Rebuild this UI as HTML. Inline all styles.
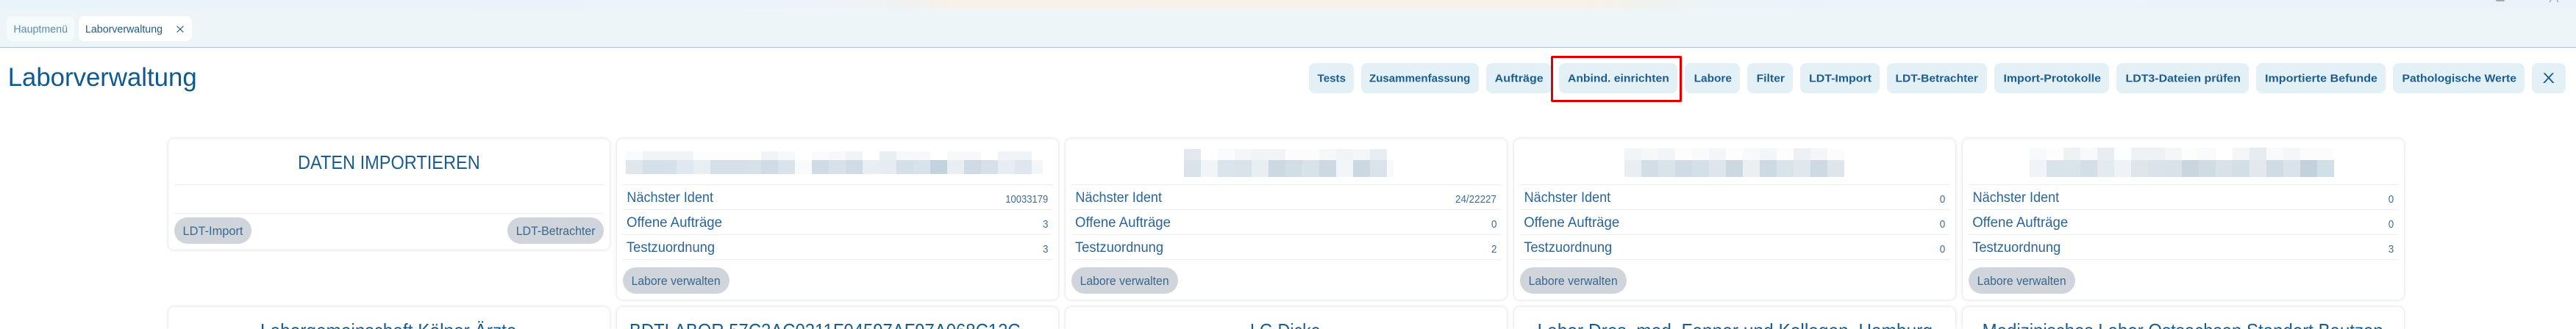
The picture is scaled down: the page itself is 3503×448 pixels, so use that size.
<!DOCTYPE html>
<html lang="de"><head><meta charset="utf-8"><title>Laborverwaltung</title>
<style>
html,body{margin:0;padding:0;width:3503px;height:448px;overflow:hidden;background:#fff}
#w{position:relative;width:3503px;height:448px;overflow:hidden;background:#fff}
.a{position:absolute}
#top{left:0;top:0;width:3503px;height:12px;background:linear-gradient(90deg,#e9f3fa 0,#ebf3fb 1000px,#eef3fb 1100px,#f1f2ef 1250px,#f9f0e8 1300px,#f8f0ea 2150px,#eef3ef 2250px,#ebf4f8 2350px,#ebf3fb 2500px,#ebf3fa 3503px)}
#bar{left:0;top:12px;width:3503px;height:52px;background:#edf5f9;border-bottom:1px solid #a9c8da}
.tab{top:22px;height:34px;border-radius:8px}
.b{top:86px;height:41px;background:#e3f0f6;border-radius:8px}
.c{width:600px;background:#fff;border-radius:8px;box-shadow:0 0 4px rgba(70,85,115,.24);box-sizing:border-box}
.e{top:418px;height:30px;border-radius:8px 8px 0 0}
.d{height:1px;background:#ebeef1}
.p{background:#d0d5db;height:36px;top:364px;border-radius:18px}
.bl{display:flex}
.bl i{display:block;width:23px;height:100%;flex:none}
svg{position:absolute;left:0;top:0}
text{font-family:"Liberation Sans",sans-serif;fill:#0b5184}
.bt{font-size:14.5px;font-weight:700;fill:#1d5c8c}
.r{font-size:19px;fill:#2a659a}
.v{font-size:15px;fill:#3f6f96}
.g{font-size:17px;fill:#3a6790}
.h{font-size:26px;fill:#1a5c8c}
</style></head><body>
<div id="w">
<div class="a" id="top"></div>
<div class="a" id="bar"></div>
<div class="a" style="left:3394px;top:0;width:12px;height:2px;background:#a4a9ad;border-radius:0 0 3px 3px"></div>
<div class="a tab" style="left:9px;width:92px;background:#f5fafb"></div>
<div class="a tab" style="left:107px;width:154px;background:#fff"></div>

<div class="a b" style="left:1780px;width:61px"></div>
<div class="a b" style="left:1851px;width:160px"></div>
<div class="a b" style="left:2021px;width:89px"></div>
<div class="a b" style="left:2120px;width:161px"></div>
<div class="a b" style="left:2291px;width:75px"></div>
<div class="a b" style="left:2376px;width:62px"></div>
<div class="a b" style="left:2448px;width:108px"></div>
<div class="a b" style="left:2566px;width:136px"></div>
<div class="a b" style="left:2712px;width:156px"></div>
<div class="a b" style="left:2878px;width:180px"></div>
<div class="a b" style="left:3068px;width:176px"></div>
<div class="a b" style="left:3254px;width:179px"></div>
<div class="a b" style="left:3443px;width:46px"></div>
<div class="a" style="left:2109px;top:76px;width:178px;height:63px;border:3px solid #e00000;box-sizing:border-box;border-radius:2px"></div>

<div class="a c" style="left:229px;top:189px;height:151px"></div>
<div class="a c" style="left:839px;top:189px;height:219px"></div>
<div class="a c" style="left:1449px;top:189px;height:219px"></div>
<div class="a c" style="left:2059px;top:189px;height:219px"></div>
<div class="a c" style="left:2669px;top:189px;height:219px"></div>
<div class="a c e" style="left:229px"></div>
<div class="a c e" style="left:839px"></div>
<div class="a c e" style="left:1449px"></div>
<div class="a c e" style="left:2059px"></div>
<div class="a c e" style="left:2669px"></div>

<div class="a d" style="left:237px;top:251px;width:584px"></div>
<div class="a d" style="left:237px;top:290px;width:584px"></div>
<div class="a p" style="left:237px;top:296px;width:105px"></div>
<div class="a p" style="left:690px;top:296px;width:131px"></div>

<div class="a d" style="left:847px;top:251px;width:584px"></div><div class="a d" style="left:847px;top:285px;width:584px"></div><div class="a d" style="left:847px;top:319px;width:584px"></div><div class="a d" style="left:847px;top:353px;width:584px"></div>
<div class="a d" style="left:1457px;top:251px;width:584px"></div><div class="a d" style="left:1457px;top:285px;width:584px"></div><div class="a d" style="left:1457px;top:319px;width:584px"></div><div class="a d" style="left:1457px;top:353px;width:584px"></div>
<div class="a d" style="left:2067px;top:251px;width:584px"></div><div class="a d" style="left:2067px;top:285px;width:584px"></div><div class="a d" style="left:2067px;top:319px;width:584px"></div><div class="a d" style="left:2067px;top:353px;width:584px"></div>
<div class="a d" style="left:2677px;top:251px;width:584px"></div><div class="a d" style="left:2677px;top:285px;width:584px"></div><div class="a d" style="left:2677px;top:319px;width:584px"></div><div class="a d" style="left:2677px;top:353px;width:584px"></div>
<div class="a p" style="left:847px;width:145px"></div>
<div class="a p" style="left:1457px;width:145px"></div>
<div class="a p" style="left:2067px;width:145px"></div>
<div class="a p" style="left:2677px;width:145px"></div>

<!-- blurred titles -->
<div class="a bl" style="left:851px;top:206px;height:12px"><i style="background:#fafbfc"></i><i style="background:#f1f4f7"></i><i style="background:#f1f4f7"></i><i style="background:#f1f4f7"></i><i style="background:#fdfdfe"></i><i style="background:#fdfdfe"></i><i style="background:#fdfdfe"></i><i style="background:#fdfdfe"></i><i style="background:#f1f4f7"></i><i style="background:#f7f8fa"></i><i style="background:#fff"></i><i style="background:#fafbfc"></i><i style="background:#f6f8fa"></i><i style="background:#f1f4f7"></i><i style="background:#fff"></i><i style="background:#e8eef1"></i><i style="background:#f6f8fa"></i><i style="background:#f6f8fa"></i><i style="background:#fff"></i><i style="background:#f6f8fa"></i><i style="background:#f6f8fa"></i><i style="background:#fff"></i><i style="background:#f1f4f7"></i><i style="background:#f1f4f7"></i></div>
<div class="a bl" style="left:851px;top:218px;height:19px"><i style="background:#dfe7ed"></i><i style="background:#d3e0e8"></i><i style="background:#d5e0e8"></i><i style="background:#e1e8ef"></i><i style="background:#e9eef3"></i><i style="background:#d5dfe7"></i><i style="background:#d5dfe7"></i><i style="background:#d7e1e8"></i><i style="background:#cfdce5"></i><i style="background:#dbe3ea"></i><i style="background:#f9fafc"></i><i style="background:#cfdbe5"></i><i style="background:#d8e1e9"></i><i style="background:#d0dce5"></i><i style="background:#e9eef2"></i><i style="background:#e6ecf1"></i><i style="background:#d4e0e8"></i><i style="background:#d7e2e9"></i><i style="background:#c3d3dd"></i><i style="background:#e9eef3"></i><i style="background:#cfdbe4"></i><i style="background:#d6e0e8"></i><i style="background:#e7edf2"></i><i style="background:#dfe6ed"></i><i style="background:#f3f6f9;width:15px"></i></div>

<div class="a bl" style="left:1610px;top:203px;height:15px"><i style="background:#e2e8ee"></i><i style="background:#fff"></i><i style="background:#fafbfc"></i><i style="background:#f4f6f9"></i><i style="background:#f0f4f7"></i><i style="background:#f0f4f7"></i><i style="background:#fcfcfd"></i><i style="background:#fcfcfd"></i><i style="background:#f5f7f9"></i><i style="background:#f1f4f7"></i><i style="background:#f4f7f9"></i><i style="background:#e8edf1"></i></div>
<div class="a bl" style="left:1610px;top:218px;height:23px"><i style="background:#dbe3ea"></i><i style="background:#f2f5f8"></i><i style="background:#dbe4ea"></i><i style="background:#d9e3ea"></i><i style="background:#e8eef2"></i><i style="background:#ccd9e2"></i><i style="background:#d2dee6"></i><i style="background:#d8e2e9"></i><i style="background:#ccd9e2"></i><i style="background:#f3f6f9"></i><i style="background:#c9d8e1"></i><i style="background:#dae3e9"></i><i style="background:#f8fafb;width:9px"></i></div>

<div class="a bl" style="left:2209px;top:202px;height:16px"><i style="background:#f2f5f8"></i><i style="background:#f5f7f9"></i><i style="background:#f2f5f8"></i><i style="background:#fdfdfe"></i><i style="background:#f9fafb"></i><i style="background:#f3f6f8"></i><i style="background:#fdfdfe"></i><i style="background:#f8f9fb"></i><i style="background:#f3f6f8"></i><i style="background:#fdfdfe"></i><i style="background:#edf0f4"></i><i style="background:#f3f5f8"></i><i style="background:#fcfcfd"></i></div>
<div class="a bl" style="left:2209px;top:218px;height:23px"><i style="background:#e9eef2"></i><i style="background:#d2dee6"></i><i style="background:#d9e3ea"></i><i style="background:#d0dce5"></i><i style="background:#d4e0e8"></i><i style="background:#dde6ec"></i><i style="background:#cbd8e2"></i><i style="background:#ebeff2"></i><i style="background:#ccdae3"></i><i style="background:#d8e3ea"></i><i style="background:#e0e7ed"></i><i style="background:#cedae3"></i><i style="background:#dee5eb"></i></div>

<div class="a bl" style="left:2760px;top:201px;height:17px"><i style="background:#f8f9fb"></i><i style="background:#fdfdfe"></i><i style="background:#edf2f5"></i><i style="background:#f7f9fa"></i><i style="background:#e9edf1"></i><i style="background:#fdfefe"></i><i style="background:#eef2f5"></i><i style="background:#eef2f5"></i><i style="background:#f4f6f8"></i><i style="background:#fcfdfd"></i><i style="background:#f9fafb"></i><i style="background:#fff"></i><i style="background:#f4f6f8"></i><i style="background:#e6ecf2"></i><i style="background:#f9fafb"></i><i style="background:#f4f6f8"></i><i style="background:#fcfcfd"></i><i style="background:#fcfcfd"></i></div>
<div class="a bl" style="left:2760px;top:218px;height:23px"><i style="background:#f0f3f7"></i><i style="background:#d9e3ea"></i><i style="background:#d9e3ea"></i><i style="background:#d2dfe6"></i><i style="background:#e4ebef"></i><i style="background:#f0f3f6"></i><i style="background:#dee5eb"></i><i style="background:#dae3ea"></i><i style="background:#d9e2e9"></i><i style="background:#c9d6df"></i><i style="background:#d0dce4"></i><i style="background:#dae2e9"></i><i style="background:#d3dfe7"></i><i style="background:#e2e8ee"></i><i style="background:#cfdbe5"></i><i style="background:#d9e3e9"></i><i style="background:#c2d1db"></i><i style="background:#d1e0e6"></i></div>

<svg width="3503" height="448" viewBox="0 0 3503 448" xmlns="http://www.w3.org/2000/svg">
<path d="M3467 3 L3469 0 M3477 0 L3479 3" stroke="#9aa0a5" stroke-width="1.2" fill="none"/>
<text x="18.4" y="44.5" font-size="14.5" style="fill:#5f8aa8" textLength="73.6" lengthAdjust="spacingAndGlyphs">Hauptmenü</text>
<text x="116" y="44.5" font-size="14.5" style="fill:#1f5a85" textLength="105" lengthAdjust="spacingAndGlyphs">Laborverwaltung</text>
<path d="M240.5 35.5 L249.5 44 M249.5 35.5 L240.5 44" stroke="#1f5a85" stroke-width="1.2" fill="none"/>
<text x="10.7" y="117" font-size="35" style="fill:#0e5a90" textLength="257" lengthAdjust="spacingAndGlyphs">Laborverwaltung</text>

<text class="bt" x="1791.6" y="111.5" textLength="38.4" lengthAdjust="spacingAndGlyphs">Tests</text>
<text class="bt" x="1862" y="111.5" textLength="137.4" lengthAdjust="spacingAndGlyphs">Zusammenfassung</text>
<text class="bt" x="2032.7" y="111.5" textLength="66" lengthAdjust="spacingAndGlyphs">Aufträge</text>
<text class="bt" x="2132" y="111.5" textLength="137.8" lengthAdjust="spacingAndGlyphs">Anbind. einrichten</text>
<text class="bt" x="2303.6" y="111.5" textLength="51.4" lengthAdjust="spacingAndGlyphs">Labore</text>
<text class="bt" x="2388.6" y="111.5" textLength="38.4" lengthAdjust="spacingAndGlyphs">Filter</text>
<text class="bt" x="2460" y="111.5" textLength="85" lengthAdjust="spacingAndGlyphs">LDT-Import</text>
<text class="bt" x="2577.5" y="111.5" textLength="112.5" lengthAdjust="spacingAndGlyphs">LDT-Betrachter</text>
<text class="bt" x="2724.5" y="111.5" textLength="132.5" lengthAdjust="spacingAndGlyphs">Import-Protokolle</text>
<text class="bt" x="2890.5" y="111.5" textLength="156.5" lengthAdjust="spacingAndGlyphs">LDT3-Dateien prüfen</text>
<text class="bt" x="3080" y="111.5" textLength="153" lengthAdjust="spacingAndGlyphs">Importierte Befunde</text>
<text class="bt" x="3266.5" y="111.5" textLength="155.5" lengthAdjust="spacingAndGlyphs">Pathologische Werte</text>
<text x="3457.5" y="113" font-size="19" style="fill:#1a5a8a" textLength="16.5" lengthAdjust="spacingAndGlyphs">X</text>

<text class="h" x="405" y="230" textLength="247.7" lengthAdjust="spacingAndGlyphs">DATEN IMPORTIEREN</text>
<text class="g" x="248.5" y="320" textLength="82" lengthAdjust="spacingAndGlyphs">LDT-Import</text>
<text class="g" x="701.7" y="320" textLength="107.8" lengthAdjust="spacingAndGlyphs">LDT-Betrachter</text>

<text class="r" x="852.4" y="275" textLength="117.6" lengthAdjust="spacingAndGlyphs">Nächster Ident</text>
<text class="r" x="852" y="309" textLength="130" lengthAdjust="spacingAndGlyphs">Offene Aufträge</text>
<text class="r" x="852" y="343" textLength="120" lengthAdjust="spacingAndGlyphs">Testzuordnung</text>
<text class="v" x="1367.3" y="276" textLength="58" lengthAdjust="spacingAndGlyphs">10033179</text>
<text class="v" x="1418" y="310" textLength="7.5" lengthAdjust="spacingAndGlyphs">3</text>
<text class="v" x="1418" y="344" textLength="7.5" lengthAdjust="spacingAndGlyphs">3</text>
<text class="g" x="858.6" y="388" textLength="121" lengthAdjust="spacingAndGlyphs">Labore verwalten</text>

<text class="r" x="1462.4" y="275" textLength="117.6" lengthAdjust="spacingAndGlyphs">Nächster Ident</text>
<text class="r" x="1462" y="309" textLength="130" lengthAdjust="spacingAndGlyphs">Offene Aufträge</text>
<text class="r" x="1462" y="343" textLength="120" lengthAdjust="spacingAndGlyphs">Testzuordnung</text>
<text class="v" x="1979" y="276" textLength="56" lengthAdjust="spacingAndGlyphs">24/22227</text>
<text class="v" x="2028" y="310" textLength="7.5" lengthAdjust="spacingAndGlyphs">0</text>
<text class="v" x="2028" y="344" textLength="7.5" lengthAdjust="spacingAndGlyphs">2</text>
<text class="g" x="1468.6" y="388" textLength="121" lengthAdjust="spacingAndGlyphs">Labore verwalten</text>

<text class="r" x="2072.6" y="275" textLength="117.6" lengthAdjust="spacingAndGlyphs">Nächster Ident</text>
<text class="r" x="2072.2" y="309" textLength="130" lengthAdjust="spacingAndGlyphs">Offene Aufträge</text>
<text class="r" x="2072.2" y="343" textLength="120" lengthAdjust="spacingAndGlyphs">Testzuordnung</text>
<text class="v" x="2637.8" y="276" textLength="7.5" lengthAdjust="spacingAndGlyphs">0</text>
<text class="v" x="2637.8" y="310" textLength="7.5" lengthAdjust="spacingAndGlyphs">0</text>
<text class="v" x="2637.8" y="344" textLength="7.5" lengthAdjust="spacingAndGlyphs">0</text>
<text class="g" x="2078.6" y="388" textLength="121" lengthAdjust="spacingAndGlyphs">Labore verwalten</text>

<text class="r" x="2682.6" y="275" textLength="117.6" lengthAdjust="spacingAndGlyphs">Nächster Ident</text>
<text class="r" x="2682.2" y="309" textLength="130" lengthAdjust="spacingAndGlyphs">Offene Aufträge</text>
<text class="r" x="2682.2" y="343" textLength="120" lengthAdjust="spacingAndGlyphs">Testzuordnung</text>
<text class="v" x="3247.8" y="276" textLength="7.5" lengthAdjust="spacingAndGlyphs">0</text>
<text class="v" x="3247.8" y="310" textLength="7.5" lengthAdjust="spacingAndGlyphs">0</text>
<text class="v" x="3247.8" y="344" textLength="7.5" lengthAdjust="spacingAndGlyphs">3</text>
<text class="g" x="2688.6" y="388" textLength="121" lengthAdjust="spacingAndGlyphs">Labore verwalten</text>

<text class="h" x="354" y="459" textLength="348.5" lengthAdjust="spacingAndGlyphs">Laborgemeinschaft Kölner Ärzte</text>
<text class="h" x="856" y="459" textLength="531.6" lengthAdjust="spacingAndGlyphs">BDTLABOR 57C3AC0211F04597AF97A068C12C</text>
<text class="h" x="1700" y="459" textLength="95.7" lengthAdjust="spacingAndGlyphs">LG Dicke</text>
<text class="h" x="2090.6" y="459" textLength="537.4" lengthAdjust="spacingAndGlyphs">Labor Dres. med. Fenner und Kollegen, Hamburg</text>
<text class="h" x="2695.6" y="459" textLength="545.2" lengthAdjust="spacingAndGlyphs">Medizinisches Labor Ostsachsen Standort Bautzen</text>
</svg>
</div>
</body></html>
